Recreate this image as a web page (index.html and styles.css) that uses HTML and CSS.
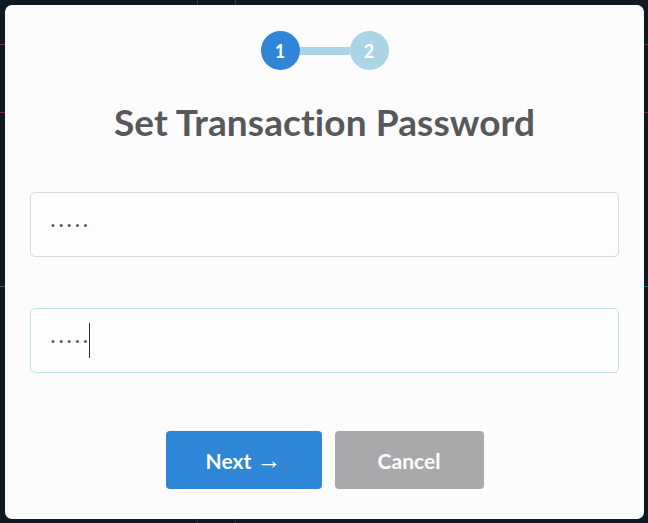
FILE: index.html
```html
<!DOCTYPE html>
<html lang="en">
<head>
<meta charset="utf-8">
<title>Set Transaction Password</title>
<link rel="stylesheet" href="styles.css">
</head>
<body>
<div class="backdrop">
  <div class="modal">
    <div class="steps">
      <span class="step step-active">1</span>
      <span class="step-line"></span>
      <span class="step step-next">2</span>
    </div>
    <h1 class="title">Set Transaction Password</h1>
    <div class="field">
      <span class="mask">•••••</span>
    </div>
    <div class="field field-focus">
      <span class="mask">•••••</span><span class="caret"></span>
    </div>
    <div class="actions">
      <button class="btn btn-primary">Next <span class="arrow">→</span></button>
      <button class="btn btn-muted">Cancel</button>
    </div>
  </div>
</div>
</body>
</html>
```
FILE: styles.css
```css
* { box-sizing: border-box; }
html, body { margin: 0; padding: 0; }
body {
  width: 648px;
  height: 523px;
  overflow: hidden;
  background-color: #0f1923;
  background-image:
    linear-gradient(#7a2a4a, #7a2a4a),
    linear-gradient(#7a2a4a, #7a2a4a),
    linear-gradient(#1f6b6e, #1f6b6e),
    linear-gradient(#2a3a4a, #2a3a4a),
    linear-gradient(#2a3a4a, #2a3a4a);
  background-size: 100% 1px, 100% 1px, 100% 1px, 1px 100%, 1px 100%;
  background-position: 0 44px, 0 112px, 0 286px, 197px 0, 235px 0;
  background-repeat: no-repeat;
  font-family: "Lato", "Liberation Sans", sans-serif;
}
.backdrop {
  padding: 5px 4px 4px 5px;
}
.modal {
  width: 639px;
  height: 514px;
  background: #fcfcfd;
  border-radius: 7px;
  padding: 26px 25px 30px 25px;
  display: flex;
  flex-direction: column;
  align-items: stretch;
}
.steps {
  display: flex;
  align-items: center;
  justify-content: center;
  height: 39px;
}
.step {
  width: 39px;
  height: 39px;
  border-radius: 50%;
  display: flex;
  align-items: center;
  justify-content: center;
  color: #fff;
  font-weight: 700;
  font-size: 18px;
}
.step-active { background: #2f86d6; }
.step-next { background: #a9d5e6; }
.step-line {
  width: 50px;
  height: 8px;
  background: #a9d5e6;
}
.title {
  margin: 27px 0 0 0;
  text-align: center;
  font-size: 37px;
  line-height: 50px;
  font-weight: 700;
  color: #58585b;
  letter-spacing: 0.1px;
}
.field {
  margin-top: 45px;
  height: 65px;
  border: 1px solid #d9d9db;
  border-radius: 5px;
  background: #fdfdfd;
  display: flex;
  align-items: center;
  padding-left: 20px;
  color: #55565a;
}
.field + .field { margin-top: 51px; }
.field-focus { border-color: #bfe1ef; }
.mask {
  font-family: "Liberation Sans", sans-serif;
  font-size: 11px;
  letter-spacing: 4.3px;
}
.caret {
  width: 1px;
  height: 35px;
  background: #3a2a35;
  margin-left: -3px;
}
.actions {
  margin-top: auto;
  display: flex;
  justify-content: center;
  gap: 13px;
}
.btn {
  height: 58px;
  border: none;
  border-radius: 4px;
  color: #fff;
  font-family: "Lato", "Liberation Sans", sans-serif;
  font-weight: 700;
  font-size: 21px;
  padding: 0;
}
.arrow {
  font-family: "Liberation Sans", sans-serif;
  font-weight: 400;
  font-size: 25px;
  line-height: 1;
}
.btn-primary { width: 156px; background: #2f86d6; }
.btn-muted { width: 149px; background: #a9a8ab; }
```
